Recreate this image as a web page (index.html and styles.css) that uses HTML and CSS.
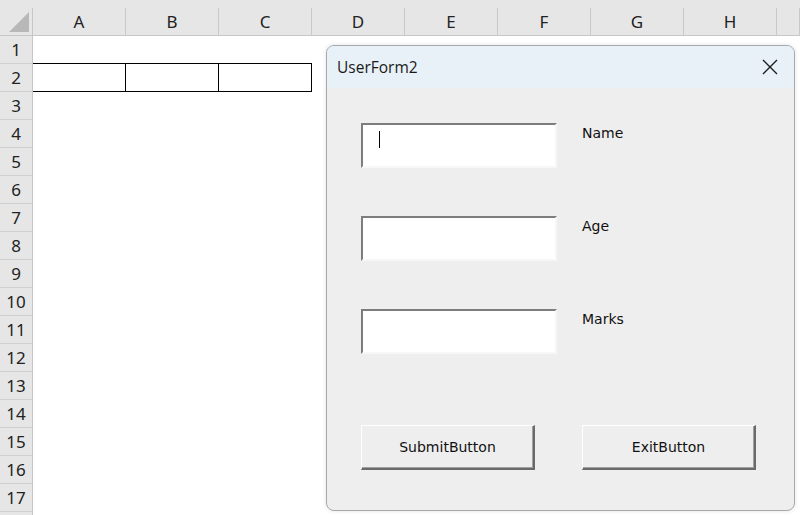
FILE: index.html
```html
<!DOCTYPE html>
<html lang="en">
<head>
    <meta charset="UTF-8">
    <title>UserForm2</title>
    <link rel="stylesheet" href="styles.css">
</head>
<body>
    <div class="sheet">
        <div class="col-head">
            <div class="corner"><div class="corner-tri"></div></div>
            <div class="col">A</div>
            <div class="col">B</div>
            <div class="col">C</div>
            <div class="col">D</div>
            <div class="col">E</div>
            <div class="col">F</div>
            <div class="col">G</div>
            <div class="col">H</div>
            <div class="col last"></div>
        </div>
        <div class="body">
            <div class="row-head">
                <div class="rnum">1</div>
                <div class="rnum">2</div>
                <div class="rnum">3</div>
                <div class="rnum">4</div>
                <div class="rnum">5</div>
                <div class="rnum">6</div>
                <div class="rnum">7</div>
                <div class="rnum">8</div>
                <div class="rnum">9</div>
                <div class="rnum">10</div>
                <div class="rnum">11</div>
                <div class="rnum">12</div>
                <div class="rnum">13</div>
                <div class="rnum">14</div>
                <div class="rnum">15</div>
                <div class="rnum">16</div>
                <div class="rnum">17</div>
                <div class="rnum partial"></div>
            </div>
            <div class="cells">
                <div class="bordered">
                    <div class="bcell"></div>
                    <div class="bcell"></div>
                    <div class="bcell"></div>
                </div>
            </div>
        </div>
    </div>

    <div class="userform">
        <div class="titlebar">
            <span class="title">UserForm2</span>
            <svg class="close" width="16" height="16" viewBox="0 0 16 16">
                <path d="M1 1 L15 15 M15 1 L1 15" stroke="#1c1c1c" stroke-width="1.4" fill="none"/>
            </svg>
        </div>
        <div class="form-body">
            <div class="form-row">
                <div class="textbox"><span class="caret"></span></div>
                <div class="label">Name</div>
            </div>
            <div class="form-row">
                <div class="textbox"></div>
                <div class="label">Age</div>
            </div>
            <div class="form-row">
                <div class="textbox"></div>
                <div class="label">Marks</div>
            </div>
            <div class="buttons">
                <div class="btn">SubmitButton</div>
                <div class="btn">ExitButton</div>
            </div>
        </div>
    </div>
</body>
</html>
```

FILE: styles.css
```css
body {
    margin: 0;
    width: 800px;
    height: 515px;
    overflow: hidden;
    background: #ffffff;
    font-family: "Noto Sans", "Open Sans", sans-serif;
    position: relative;
}

.sheet {
    width: 800px;
    height: 515px;
    overflow: hidden;
}

.col-head {
    display: flex;
    height: 36px;
    background: #e6e6e6;
    border-bottom: 1px solid #c6c6c6;
    box-sizing: border-box;
    overflow: hidden;
}

.corner {
    width: 33px;
    flex: none;
    position: relative;
    box-sizing: border-box;
    border-right: 1px solid #c6c6c6;
    margin-top: 8px;
}

.corner-tri {
    position: absolute;
    right: 3px;
    bottom: 3px;
    width: 0;
    height: 0;
    border-left: 20px solid transparent;
    border-bottom: 20px solid #b8b8b8;
}

.col {
    width: 93px;
    flex: none;
    box-sizing: border-box;
    border-right: 1px solid #c9c9c9;
    margin-top: 8px;
    text-align: center;
    font-size: 17px;
    line-height: 27px;
    color: #222;
}

.col.last {
    width: 23px;
}

.body {
    display: flex;
}

.row-head {
    width: 33px;
    flex: none;
    background: #e6e6e6;
    border-right: 1px solid #c6c6c6;
    box-sizing: border-box;
}

.rnum {
    height: 28px;
    box-sizing: border-box;
    border-bottom: 1px solid #cfcfcf;
    text-align: center;
    font-size: 17px;
    line-height: 27px;
    color: #222;
}

.cells {
    flex: 1;
    padding-top: 27px;
}

.bordered {
    display: flex;
    width: 279px;
    height: 29px;
    box-sizing: border-box;
    border-top: 1px solid #000;
    border-bottom: 1px solid #000;
}

.bcell {
    width: 93px;
    box-sizing: border-box;
    border-right: 1px solid #000;
}

/* floating VBA form window */
.userform {
    position: absolute;
    left: 326px;
    top: 45px;
    width: 469px;
    height: 466px;
    box-sizing: border-box;
    border: 1px solid #a9a9a9;
    border-radius: 8px;
    background: #efeeee;
    box-shadow: 0 0 4px rgba(0,0,0,0.12);
    overflow: hidden;
}

.titlebar {
    height: 42px;
    background: #e8f1f7;
    display: flex;
    align-items: center;
    justify-content: space-between;
    padding: 0 16px 0 10px;
}

.title {
    font-family: "Open Sans", sans-serif;
    font-size: 15.5px;
    color: #1a1a1a;
}

.close {
    display: block;
}

.form-body {
    padding: 35px 0 0 34px;
    font-family: "DejaVu Sans", sans-serif;
    font-size: 14px;
    color: #111;
}

.form-row {
    display: flex;
    gap: 25px;
    margin-bottom: 48px;
}

.form-row:nth-child(3) {
    margin-bottom: 71px;
}

.textbox {
    width: 196px;
    height: 45px;
    box-sizing: border-box;
    background: #fff;
    border-top: 2px solid #7d7d7d;
    border-left: 2px solid #7d7d7d;
    border-bottom: 2px solid #f7f7f7;
    border-right: 2px solid #f7f7f7;
    position: relative;
}

.caret {
    position: absolute;
    left: 16px;
    top: 6px;
    width: 1px;
    height: 17px;
    background: #000;
}

.label {
    padding-top: 1px;
    line-height: 18px;
}

.buttons {
    display: flex;
    gap: 47px;
}

.btn {
    width: 174px;
    height: 45px;
    box-sizing: border-box;
    border-top: 1px solid #fff;
    border-left: 1px solid #fff;
    border-bottom: 2px solid #6a6a6a;
    border-right: 2px solid #6a6a6a;
    box-shadow: inset -1px -1px 0 #a0a0a0;
    display: flex;
    align-items: center;
    justify-content: center;
}
```
